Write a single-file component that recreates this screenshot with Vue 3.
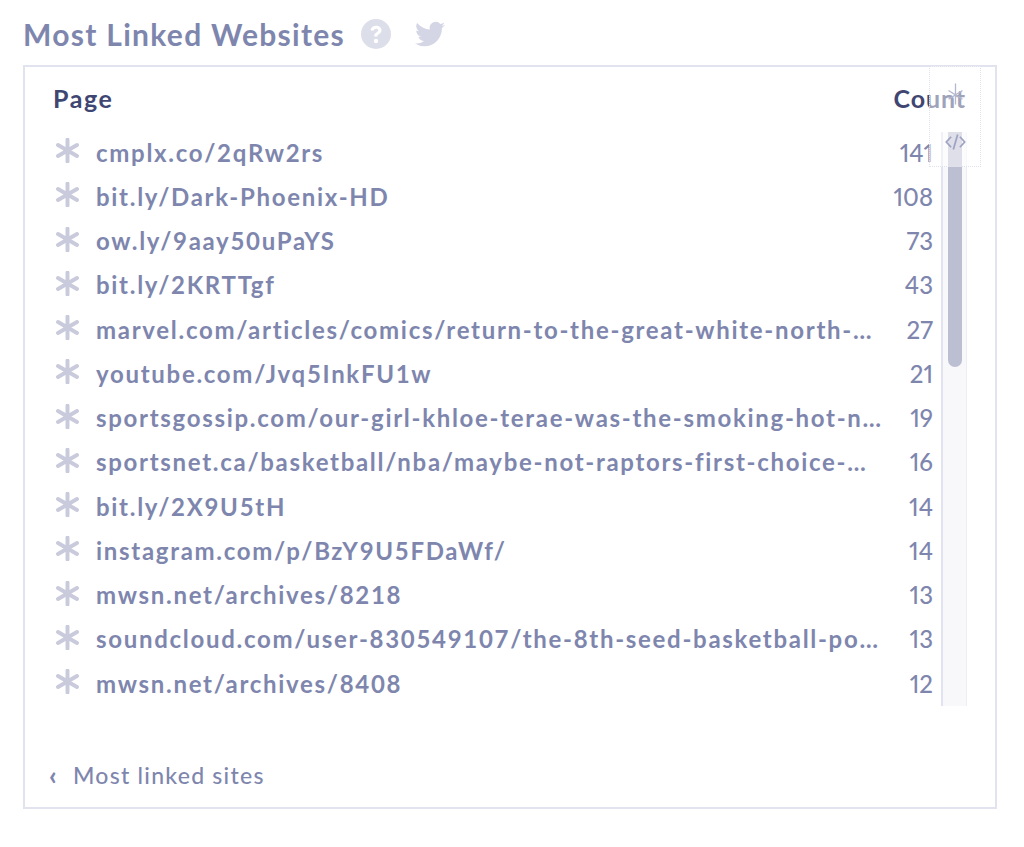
<script setup>
const rows = [
  ['cmplx.co/2qRw2rs', 141],
  ['bit.ly/Dark-Phoenix-HD', 108],
  ['ow.ly/9aay50uPaYS', 73],
  ['bit.ly/2KRTTgf', 43],
  ['marvel.com/articles/comics/return-to-the-great-white-north-…', 27],
  ['youtube.com/Jvq5InkFU1w', 21],
  ['sportsgossip.com/our-girl-khloe-terae-was-the-smoking-hot-n…', 19],
  ['sportsnet.ca/basketball/nba/maybe-not-raptors-first-choice-…', 16],
  ['bit.ly/2X9U5tH', 14],
  ['instagram.com/p/BzY9U5FDaWf/', 14],
  ['mwsn.net/archives/8218', 13],
  ['soundcloud.com/user-830549107/the-8th-seed-basketball-po…', 13],
  ['mwsn.net/archives/8408', 12],
]
</script>

<template>
  <div class="page">
    <header class="title-row">
      <h2 class="title">Most Linked Websites</h2>
      <svg class="help" viewBox="0 0 30 30" aria-hidden="true">
        <circle cx="15" cy="15" r="15" fill="#dcdeea" />
        <path d="M9.500 11.600c.2-3.200 2.500-4.900 5.600-4.900 3.200 0 5.400 1.800 5.400 4.500 0 2.100-1.200 3.200-2.700 4.100-1.100.7-1.400 1.100-1.400 2.300h-3.200c0-2.300.6-3.200 2.200-4.200 1.100-.7 1.800-1.200 1.800-2.100 0-1-.8-1.600-2-1.600-1.300 0-2.100.7-2.300 1.900z" fill="#fff" />
        <circle cx="15" cy="22" r="2.200" fill="#fff" />
      </svg>
      <svg class="bird" viewBox="0 0 24 24" aria-hidden="true">
        <path d="M24 4.600c-.9.400-1.800.7-2.800.8 1-.6 1.800-1.600 2.200-2.700-1 .6-2 1-3.100 1.200A4.900 4.900 0 0 0 11.900 8.400C7.800 8.200 4.200 6.200 1.700 3.200A4.900 4.900 0 0 0 3.200 9.800c-.8 0-1.600-.2-2.200-.6 0 2.400 1.700 4.400 3.900 4.900-.7.200-1.500.2-2.200.1.600 2 2.400 3.400 4.600 3.400A9.900 9.900 0 0 1 0 19.600 14 14 0 0 0 7.500 21.800c9.100 0 14.300-7.700 14-14.600 1-.7 1.800-1.600 2.500-2.600z" fill="#d4d6e5" />
      </svg>
    </header>

    <section class="panel">
      <div class="table">
        <div class="head">
          <span class="head-page">Page</span>
          <span class="head-count">Count</span>
        </div>
        <ul class="rows">
          <li v-for="row in rows" :key="row[0]" class="row">
            <svg class="star" viewBox="0 0 24 24" aria-hidden="true">
              <path d="M12 1.500V22.500M2.900 6.750L21.100 17.250M21.100 6.750L2.900 17.250" stroke="#c9cbdc" stroke-width="3.800" stroke-linecap="round" fill="none" />
            </svg>
            <span class="link">{{ row[0] }}</span>
            <span class="count">{{ row[1] }}</span>
          </li>
        </ul>
      </div>
      <a class="back"><span class="chev">‹</span>Most linked sites</a>

      <div class="scrollbar">
        <div class="thumb"></div>
      </div>
      <div class="tools">
        <svg class="tool-star" viewBox="0 0 24 24" aria-hidden="true">
          <path d="M12 0V24M4 8L20 18M20 8L4 18" stroke="#b4b7cf" stroke-width="1.500" fill="none" />
        </svg>
        <svg class="tool-code" viewBox="0 0 24 20" aria-hidden="true">
          <path d="M7 4L1.500 10L7 16M17 4L22.500 10L17 16M14.500 1.500L9.500 18.500" stroke="#9ea3c2" stroke-width="2" fill="none" />
        </svg>
      </div>
    </section>
  </div>
</template>

<style scoped>
.page {
  box-sizing: border-box;
  width: 1024px;
  height: 847px;
  padding: 15px 27px 0 23px;
  background: #fff;
  font-family: Lato, "Noto Sans", sans-serif;
  color: #7e86ae;
}
.title-row {
  display: flex;
  align-items: center;
  height: 38px;
  margin-bottom: 12px;
}
.title {
  margin: 0;
  font-size: 30px;
  font-weight: 700;
  letter-spacing: 1.300px;
  line-height: 38px;
  color: #7e86ae;
  white-space: nowrap;
}
.help {
  width: 30px;
  height: 30px;
  margin-left: 16px;
}
.bird {
  width: 30px;
  height: 30px;
  margin-left: 24px;
}
.panel {
  position: relative;
  box-sizing: border-box;
  height: 744px;
  border: 2px solid #e1e3ef;
  padding: 13px 62px 0 28px;
}
.head {
  display: flex;
  justify-content: space-between;
  height: 36px;
  align-items: center;
  font-size: 25px;
  font-weight: 700;
  color: #3f4672;
}
.head-page {
  letter-spacing: 1.600px;
}
.head-count {
  letter-spacing: 0.900px;
  margin-right: -33px;
}
.rows {
  list-style: none;
  margin: 14px 0 0;
  padding: 0;
}
.row {
  display: flex;
  align-items: center;
  height: 44.250px;
  font-size: 24px;
  font-weight: 700;
  letter-spacing: 1.700px;
  color: #7e86ae;
}
.star {
  flex: none;
  width: 25px;
  height: 25px;
  margin: -3px 16px 0 2px;
}
.link {
  flex: 1;
  min-width: 0;
  white-space: nowrap;
  overflow: hidden;
}
.count {
  flex: none;
  width: 50px;
  text-align: right;
  letter-spacing: 0;
  font-weight: 500;
  font-variant-numeric: proportional-nums;
}
.back {
  position: absolute;
  left: 24px;
  top: 692px;
  display: flex;
  align-items: center;
  height: 32px;
  font-size: 23px;
  font-weight: 500;
  letter-spacing: 1.250px;
  color: #7e86ae;
}
.chev {
  width: 24px;
  font-size: 26px;
  font-weight: 900;
  letter-spacing: 0;
}
.scrollbar {
  position: absolute;
  left: 916px;
  top: 65px;
  box-sizing: border-box;
  width: 26px;
  height: 574px;
  background: #f8f8fa;
  border-left: 2px solid #e1e3ef;
  border-right: 1px solid #eceef5;
}
.thumb {
  width: 14px;
  height: 235px;
  margin-left: 5px;
  background: #bcbfd2;
  border-radius: 0 0 7px 7px;
}
.tools {
  position: absolute;
  left: 904px;
  top: -1px;
  box-sizing: border-box;
  width: 52px;
  height: 101px;
  border: 1px dotted #dfe1ec;
  background: rgba(255, 255, 255, 0.500);
}
.tool-star {
  position: absolute;
  left: 15px;
  top: 14px;
  width: 21px;
  height: 26px;
}
.tool-code {
  position: absolute;
  left: 15px;
  top: 66px;
  width: 21px;
  height: 18px;
}
</style>
